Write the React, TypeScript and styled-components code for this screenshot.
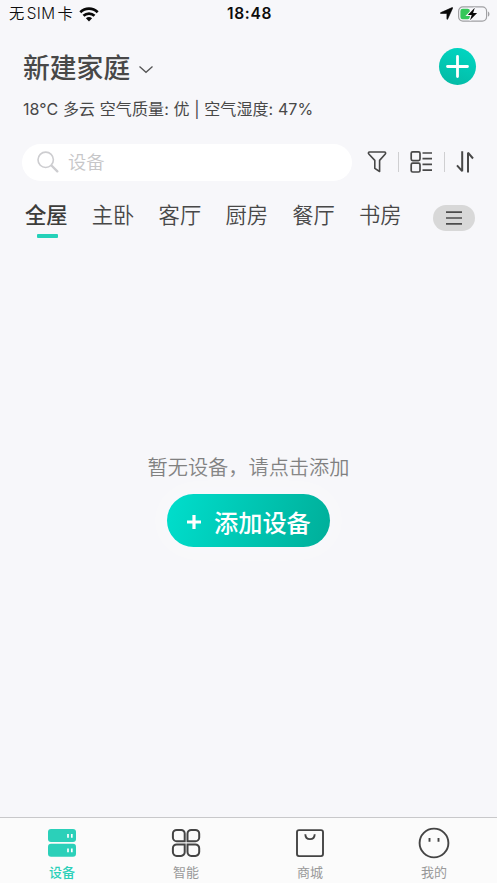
import React from "react";
import styled, { createGlobalStyle } from "styled-components";

const GlobalStyle = createGlobalStyle`
  * { box-sizing: border-box; }
  body {
    margin: 0;
    background: #f7f7fa;
    font-family: Inter, "Noto Sans CJK SC", sans-serif;
    color: #484848;
  }
  svg { display: block; flex: none; }
`;

const Screen = styled.div`
  display: flex;
  flex-direction: column;
  width: 497px;
  height: 883px;
  overflow: hidden;
  background: #f7f7fa;
  white-space: nowrap;
`;

const StatusBar = styled.header`
  display: grid;
  grid-template-columns: 1fr auto 1fr;
  align-items: center;
  height: 28px;
  padding: 0 7px 0 9px;
  color: #0c0c0c;
`;

const Carrier = styled.div`
  display: flex;
  align-items: center;
  gap: 6px;
  font-size: 15.3px;
  font-weight: 350;
  line-height: 28px;
`;

const CarrierName = styled.span`
  letter-spacing: 0.35px;
  word-spacing: -2.5px;
`;

const Clock = styled.time`
  font-size: 15.5px;
  font-weight: 600;
  letter-spacing: 0.7px;
  line-height: 28px;
`;

const StatusIcons = styled.div`
  display: flex;
  justify-content: flex-end;
  align-items: center;
  gap: 5px;
  padding-bottom: 1px;
`;

const HomeHeader = styled.div`
  display: flex;
  justify-content: space-between;
  align-items: center;
  height: 42px;
  margin-top: 17px;
  padding: 0 21px 0 23px;
`;

const HomeName = styled.h1`
  display: flex;
  align-items: center;
  gap: 8px;
  margin: 3px 0 0;
  font-size: 26.8px;
  font-weight: 500;
  line-height: 42px;
  svg { margin-top: 3px; }
`;

const AddRound = styled.button`
  display: flex;
  align-items: center;
  justify-content: center;
  width: 37px;
  height: 37px;
  padding: 0;
  border: 0;
  border-radius: 50%;
  background: linear-gradient(200deg, #00d8c4, #05b8a3);
`;

const Weather = styled.p`
  height: 24px;
  margin: 10px 0 0 23px;
  font-size: 16px;
  font-weight: 370;
  line-height: 24px;
  letter-spacing: 0.1px;
`;

const SearchRow = styled.div`
  display: flex;
  align-items: center;
  height: 37px;
  margin-top: 23px;
  padding: 0 22px;
`;

const SearchBox = styled.div`
  display: flex;
  align-items: center;
  gap: 9px;
  width: 330px;
  height: 37px;
  padding: 0 0 1px 15px;
  border-radius: 19px;
  background: #fff;
  color: #c6c6c8;
  font-size: 18.3px;
  font-weight: 350;
  line-height: 34px;
`;

const Tools = styled.div`
  display: flex;
  align-items: center;
  justify-content: space-between;
  width: 107px;
  margin: 0 0 1px 15px;
`;

const Divider = styled.span`
  width: 1px;
  height: 20px;
  background: #cfcfd1;
`;

const RoomRow = styled.nav`
  display: flex;
  align-items: flex-start;
  height: 46px;
  margin-top: 18px;
  padding-left: 25px;
`;

const Room = styled.div<{ $active?: boolean }>`
  width: 66.8px;
  font-size: 21.3px;
  font-weight: ${(p) => (p.$active ? 500 : 350)};
  line-height: 33px;
  color: ${(p) => (p.$active ? "#3d3d3b" : "#484848")};
  &::after {
    content: "";
    display: ${(p) => (p.$active ? "block" : "none")};
    width: 21px;
    height: 4px;
    margin: 2px 0 0 12px;
    border-radius: 1px;
    background: #24d1b9;
  }
`;

const MenuPill = styled.button`
  display: flex;
  align-items: center;
  justify-content: center;
  width: 42px;
  height: 26px;
  margin: 6px 0 0 7px;
  padding: 0;
  border: 0;
  border-radius: 13px;
  background: #d8d8d8;
`;

const Empty = styled.main`
  display: flex;
  flex: 1;
  flex-direction: column;
  align-items: center;
  padding-top: 207px;
`;

const EmptyText = styled.p`
  margin: 0;
  font-size: 20.2px;
  font-weight: 350;
  line-height: 32px;
  color: #808080;
`;

const AddDevice = styled.button`
  display: flex;
  align-items: center;
  gap: 12px;
  width: 163px;
  height: 53px;
  margin-top: 10px;
  padding: 3px 0 0 19px;
  border: 0;
  border-radius: 27px;
  background: linear-gradient(105deg, #00dcca 5%, #00b19c 95%);
  box-shadow: 0 0 24px 12px rgba(255, 255, 255, 0.25);
  color: #fff;
  font: 500 24.2px/50px "Noto Sans CJK SC", sans-serif;
`;

const TabBar = styled.footer`
  display: grid;
  grid-template-columns: repeat(4, 124px);
  height: 66px;
  border-top: 1px solid #c8c8ca;
  background: #fbfbfb;
`;

const Tab = styled.div<{ $active?: boolean }>`
  display: flex;
  flex-direction: column;
  align-items: center;
  padding-top: 9px;
  font-size: 13px;
  font-weight: ${(p) => (p.$active ? 500 : 400)};
  line-height: 20px;
  color: ${(p) => (p.$active ? "#2bd0b9" : "#999")};
  svg { margin-bottom: 3px; }
`;

const rooms = ["全屋", "主卧", "客厅", "厨房", "餐厅", "书房"];

const WifiIcon = () => (
  <svg width="20" height="15" viewBox="0 0 20 15" fill="none" stroke="#080808" strokeWidth="2.7">
    <path d="M1.3 5.2C6.2.5 13.8.5 18.7 5.2" />
    <path d="M4.5 8.7C7.6 5.8 12.4 5.8 15.5 8.7" />
    <path d="M6.9 11.2C8.7 9.6 11.3 9.6 13.1 11.2L10 14.4Z" fill="#080808" stroke="none" />
  </svg>
);

const LocationIcon = () => (
  <svg width="13" height="13" viewBox="0 0 13 13">
    <path d="M12.1.6C12.6.4 12.8.7 12.6 1.2L7.7 12C7.4 12.6 6.9 12.5 6.9 11.8V6.5H1C.2 6.5.1 6 .8 5.6Z" fill="#080808" stroke="#080808" strokeWidth=".6" />
  </svg>
);

const BatteryIcon = () => (
  <svg width="32" height="16" viewBox="0 0 32 16">
    <rect x=".6" y=".9" width="28" height="14.2" rx="4.3" fill="none" stroke="#a0a0a3" strokeWidth="1.2" />
    <path d="M30 5.4C31.9 6.2 31.9 9.8 30 10.6Z" fill="#a0a0a3" />
    <rect x="2.4" y="2.7" width="9.5" height="10.6" rx="2.3" fill="#35c759" />
    <path d="M16.8 1.8 9.8 9H13.7L12 14.2 19.1 7H15.1Z" fill="#080808" stroke="#f7f7fa" strokeWidth="2" paintOrder="stroke" />
  </svg>
);

const DevicesIcon = () => (
  <svg width="32" height="32" viewBox="0 0 32 32">
    <rect x="2" y="2.1" width="28" height="13" rx="3" fill="#2bd0b9" />
    <rect x="2" y="16.8" width="28" height="13" rx="3" fill="#2bd0b9" />
    <path d="M22 7.1V10.7M25.8 7.1V10.7M22 21.6V25.2M25.8 21.6V25.2" stroke="#fff" strokeWidth="1.7" />
  </svg>
);

const SmartIcon = () => (
  <svg width="32" height="32" viewBox="0 0 32 32" fill="none" stroke="#444" strokeWidth="2">
    <path d="M6.7 2.9h4.5a3.5 3.5 0 0 1 3.5 3.5v7.8H6.7a3.8 3.8 0 0 1-3.8-3.8V6.7a3.8 3.8 0 0 1 3.8-3.8Z" />
    <path d="M21.3 2.9h4.1A3.8 3.8 0 0 1 29.2 6.7v3.7a3.8 3.8 0 0 1-3.8 3.8h-7.9V6.7a3.8 3.8 0 0 1 3.8-3.8Z" />
    <path d="M6.7 17.4h8v7.8a3.7 3.7 0 0 1-3.7 3.7H6.7a3.8 3.8 0 0 1-3.8-3.8v-3.9a3.8 3.8 0 0 1 3.8-3.8Z" />
    <path d="M17.5 17.4h7.9a3.8 3.8 0 0 1 3.8 3.8v3.9a3.8 3.8 0 0 1-3.8 3.8h-4.1a3.8 3.8 0 0 1-3.8-3.8Z" />
  </svg>
);

const MallIcon = () => (
  <svg width="32" height="32" viewBox="0 0 32 32" fill="none" stroke="#444" strokeWidth="1.9">
    <rect x="3" y="3.1" width="26" height="26" rx="2" />
    <path d="M11.3 7.2C11.6 13.8 20.4 13.8 20.7 7.2" />
  </svg>
);

const ProfileIcon = () => (
  <svg width="32" height="32" viewBox="0 0 32 32" fill="none" stroke="#444" strokeWidth="1.9">
    <circle cx="16" cy="16" r="14.4" />
    <path d="M11.5 10.9V14.7M20.5 10.9V14.7" />
  </svg>
);

const tabs = [
  { label: "设备", Icon: DevicesIcon },
  { label: "智能", Icon: SmartIcon },
  { label: "商城", Icon: MallIcon },
  { label: "我的", Icon: ProfileIcon },
];

export default function App() {
  return (
    <Screen>
      <GlobalStyle />
      <StatusBar>
        <Carrier>
          <CarrierName>无 SIM 卡</CarrierName>
          <WifiIcon />
        </Carrier>
        <Clock>18:48</Clock>
        <StatusIcons>
          <LocationIcon />
          <BatteryIcon />
        </StatusIcons>
      </StatusBar>

      <HomeHeader>
        <HomeName>
          新建家庭
          <svg width="16" height="9" viewBox="0 0 16 9" fill="none" stroke="#555" strokeWidth="1.3">
            <path d="M1.5 1.5 8 7.3 14.5 1.5" />
          </svg>
        </HomeName>
        <AddRound aria-label="添加">
          <svg width="23" height="23" viewBox="0 0 23 23" stroke="#fff" strokeWidth="2.8" strokeLinecap="round">
            <path d="M11.5 1.5V21.5M1.5 11.5H21.5" />
          </svg>
        </AddRound>
      </HomeHeader>
      <Weather>18°C 多云 空气质量: 优 | 空气湿度: 47%</Weather>

      <SearchRow>
        <SearchBox>
          <svg width="22" height="22" viewBox="0 0 22 22" fill="none" stroke="#cdcdd0">
            <circle cx="8.7" cy="8.8" r="7.7" strokeWidth="1.6" />
            <path d="M14.5 14.5 20.3 20.4" strokeWidth="2.3" strokeLinecap="round" />
          </svg>
          设备
        </SearchBox>
        <Tools>
          <svg width="20" height="24" viewBox="0 0 20 24" fill="none" stroke="#484848" strokeWidth="1.6" strokeLinejoin="round">
            <path d="M2.5 2H17.5C18.6 2 19 3.2 18.3 4L12.6 10.4V21.5L7.8 18.3V10.4L1.8 4C1 3.2 1.4 2 2.5 2Z" />
          </svg>
          <Divider />
          <svg width="23" height="24" viewBox="0 0 23 24" fill="none" stroke="#484848" strokeWidth="1.7">
            <rect x="1.2" y="1.8" width="8.8" height="8.8" rx="1.5" />
            <rect x="1.2" y="13.2" width="8.8" height="8.8" rx="1.5" />
            <path d="M12.5 3H22M12.5 8.7H22M12.5 14.4H22M12.5 20.2H22" />
          </svg>
          <Divider />
          <svg width="18" height="24" viewBox="0 0 18 24" fill="none" stroke="#484848" strokeWidth="2" strokeLinejoin="bevel">
            <path d="M6.2 1.2V21.2L1 15.4M12 22.5V2.7L17 8.5" />
          </svg>
        </Tools>
      </SearchRow>

      <RoomRow>
        {rooms.map((room, i) => (
          <Room key={room} $active={i === 0}>{room}</Room>
        ))}
        <MenuPill aria-label="房间列表">
          <svg width="16" height="14" viewBox="0 0 16 14" stroke="#4c4c4c" strokeWidth="1.7">
            <path d="M0 1.1H16M0 7H16M0 12.8H16" />
          </svg>
        </MenuPill>
      </RoomRow>

      <Empty>
        <EmptyText>暂无设备，请点击添加</EmptyText>
        <AddDevice>
          <svg width="16" height="16" viewBox="0 0 16 16" stroke="#fff" strokeWidth="3.2">
            <path d="M8 1V15M1 8H15" />
          </svg>
          添加设备
        </AddDevice>
      </Empty>

      <TabBar>
        {tabs.map(({ label, Icon }, i) => (
          <Tab key={label} $active={i === 0}>
            <Icon />
            {label}
          </Tab>
        ))}
      </TabBar>
    </Screen>
  );
}
